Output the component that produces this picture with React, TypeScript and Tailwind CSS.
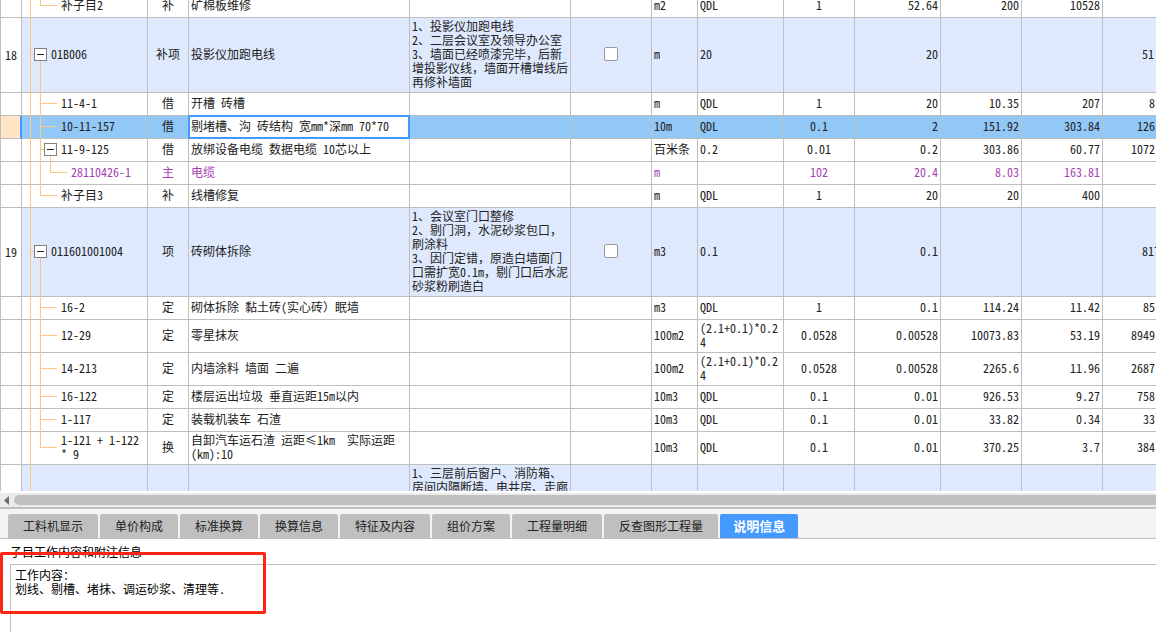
import React from 'react';

type Kind = 'group' | 'item' | 'selected' | 'material';

interface Row {
  no?: string;
  code: string;
  level: 1 | 2 | 3;
  expandable?: boolean;
  last?: boolean;
  kind: Kind;
  type: string;
  name: string;
  desc?: string;
  unit: string;
  expr: string;
  ratio: string;
  qty: string;
  price: string;
  total: string;
  extra: string;
  height: string;
}

const ROWS: Row[] = [
  { code: '补子目2', level: 2, last: true, kind: 'item', type: '补', name: '矿棉板维修', unit: 'm2', expr: 'QDL', ratio: '1', qty: '52.64', price: '200', total: '10528', extra: '', height: 'h-[23px]' },
  { no: '18', code: '01B006', level: 1, expandable: true, kind: 'group', type: '补项', name: '投影仪加跑电线', desc: '1、投影仪加跑电线\n2、二层会议室及领导办公室\n3、墙面已经喷漆完毕，后新增投影仪线，墙面开槽增线后再修补墙面', unit: 'm', expr: '20', ratio: '', qty: '20', price: '', total: '', extra: '51', height: 'h-[75px]' },
  { code: '11-4-1', level: 2, kind: 'item', type: '借', name: '开槽 砖槽', unit: 'm', expr: 'QDL', ratio: '1', qty: '20', price: '10.35', total: '207', extra: '8', height: 'h-[23px]' },
  { code: '10-11-157', level: 2, kind: 'selected', type: '借', name: '剔堵槽、沟 砖结构 宽mm*深mm 70*70', unit: '10m', expr: 'QDL', ratio: '0.1', qty: '2', price: '151.92', total: '303.84', extra: '126', height: 'h-[23px]' },
  { code: '11-9-125', level: 2, expandable: true, kind: 'item', type: '借', name: '放绑设备电缆 数据电缆 10芯以上', unit: '百米条', expr: '0.2', ratio: '0.01', qty: '0.2', price: '303.86', total: '60.77', extra: '1072', height: 'h-[23px]' },
  { code: '28110426-1', level: 3, last: true, kind: 'material', type: '主', name: '电缆', unit: 'm', expr: '', ratio: '102', qty: '20.4', price: '8.03', total: '163.81', extra: '', height: 'h-[23px]' },
  { code: '补子目3', level: 2, last: true, kind: 'item', type: '补', name: '线槽修复', unit: 'm', expr: 'QDL', ratio: '1', qty: '20', price: '20', total: '400', extra: '', height: 'h-[23px]' },
  { no: '19', code: '011601001004', level: 1, expandable: true, kind: 'group', type: '项', name: '砖砌体拆除', desc: '1、会议室门口整修\n2、剔门洞，水泥砂浆包口，刷涂料\n3、因门定错，原造白墙面门口需扩宽0.1m，剔门口后水泥砂浆粉刷造白', unit: 'm3', expr: '0.1', ratio: '', qty: '0.1', price: '', total: '', extra: '817', height: 'h-[89px]' },
  { code: '16-2', level: 2, kind: 'item', type: '定', name: '砌体拆除 黏土砖(实心砖）眠墙', unit: 'm3', expr: 'QDL', ratio: '1', qty: '0.1', price: '114.24', total: '11.42', extra: '85', height: 'h-[23px]' },
  { code: '12-29', level: 2, kind: 'item', type: '定', name: '零星抹灰', unit: '100m2', expr: '(2.1+0.1)*0.24', ratio: '0.0528', qty: '0.00528', price: '10073.83', total: '53.19', extra: '8949', height: 'h-[33px]' },
  { code: '14-213', level: 2, kind: 'item', type: '定', name: '内墙涂料 墙面 二遍', unit: '100m2', expr: '(2.1+0.1)*0.24', ratio: '0.0528', qty: '0.00528', price: '2265.6', total: '11.96', extra: '2687', height: 'h-[33px]' },
  { code: '16-122', level: 2, kind: 'item', type: '定', name: '楼层运出垃圾 垂直运距15m以内', unit: '10m3', expr: 'QDL', ratio: '0.1', qty: '0.01', price: '926.53', total: '9.27', extra: '758', height: 'h-[23px]' },
  { code: '1-117', level: 2, kind: 'item', type: '定', name: '装载机装车 石渣', unit: '10m3', expr: 'QDL', ratio: '0.1', qty: '0.01', price: '33.82', total: '0.34', extra: '33', height: 'h-[23px]' },
  { code: '1-121 + 1-122 * 9', level: 2, last: true, kind: 'item', type: '换', name: '自卸汽车运石渣 运距≤1km  实际运距(km):10', unit: '10m3', expr: 'QDL', ratio: '0.1', qty: '0.01', price: '370.25', total: '3.7', extra: '384', height: 'h-[33px]' },
  { code: '', level: 1, kind: 'group', type: '', name: '', desc: '1、三层前后窗户、消防箱、房间内隔断墙、电井房、走廊', unit: '', expr: '', ratio: '', qty: '', price: '', total: '', extra: '', height: 'h-[33px]' },
];

const TABS = ['工料机显示', '单价构成', '标准换算', '换算信息', '特征及内容', '组价方案', '工程量明细', '反查图形工程量', '说明信息'];

const ROW_STYLE: Record<Kind, string> = {
  group: 'bg-[#dee9fd]',
  item: 'bg-white',
  selected: 'bg-[#92c8f8]',
  material: 'bg-white text-[#a63fb4]',
};

const CODE_PADDING = { 1: 'pl-[29px]', 2: 'pl-[39px]', 3: 'pl-[49px]' };
const TOGGLE_LEFT = { 1: 'left-[12px]', 2: 'left-[22px]', 3: 'left-[32px]' };
const BRANCH_LEFT = { 1: 'left-[8px] w-[4px]', 2: 'left-[18px] w-[17px]', 3: 'left-[28px] w-[17px]' };

const CELL = 'border-r border-b border-[#bfbfbf] px-[2px] pb-[2px] align-middle';

// Latin is set half-width everywhere; full-width punctuation has to keep its whole cell
const Mixed: React.FC<{ text?: string }> = ({ text = '' }) => (
  <>
    {text.split(/([，）：])/).map((part, i) =>
      i % 2 === 1 ? (
        <span key={i} className="[font-feature-settings:normal]">{part}</span>
      ) : (
        part
      )
    )}
  </>
);

const TreeLines: React.FC<{ row: Row }> = ({ row }) => (
  <>
    <span className="absolute top-0 -bottom-px left-[8px] w-px bg-[#ffc67f]" />
    {row.level === 3 && <span className="absolute top-0 -bottom-px left-[18px] w-px bg-[#ffc67f]" />}
    {row.level === 2 && (
      <span className={`absolute top-0 left-[18px] w-px bg-[#ffc67f] ${row.last ? 'bottom-1/2' : '-bottom-px'}`} />
    )}
    {row.level === 3 && <span className="absolute top-0 bottom-1/2 left-[28px] w-px bg-[#ffc67f]" />}
    {row.code !== '' && <span className={`absolute top-1/2 -mt-px h-px bg-[#ffc67f] ${BRANCH_LEFT[row.level]}`} />}
    {row.expandable && (
      <>
        <span className={`absolute top-1/2 -bottom-px w-px bg-[#ffc67f] ${row.level === 1 ? 'left-[18px]' : 'left-[28px]'}`} />
        <button
          type="button"
          aria-label="折叠"
          className={`absolute top-1/2 -mt-[7px] flex size-[13px] items-center justify-center border border-[#808080] bg-white ${TOGGLE_LEFT[row.level]}`}
        >
          <span className="h-px w-[7px] bg-[#222222]" />
        </button>
      </>
    )}
  </>
);

const GridRow: React.FC<{ row: Row }> = ({ row }) => (
  <tr className={`${row.height} ${ROW_STYLE[row.kind]}`}>
    <td
      className={`border-b border-[#bfbfbf] text-center ${
        row.kind === 'selected' ? 'border-r-2 border-r-[#4499ff] bg-[#ffe4c6]' : 'border-r bg-white'
      }`}
    >
      {row.no}
    </td>
    <td className={`relative border-r border-b border-[#bfbfbf] pb-[2px] ${CODE_PADDING[row.level]}`}>
      <TreeLines row={row} />
      {row.code}
    </td>
    <td className={`${CELL} text-center`}>{row.type}</td>
    {row.kind === 'selected' ? (
      <td className="relative border-r border-b border-[#bfbfbf]">
        <input
          aria-label="名称"
          defaultValue={row.name}
          className="absolute -inset-px bg-white px-px pb-[2px] leading-[14px] outline-none border-2 border-[#4499ff]"
        />
      </td>
    ) : (
      <td className={`${CELL} whitespace-pre-wrap`}><Mixed text={row.name} /></td>
    )}
    <td className="border-r border-b border-[#bfbfbf] pb-[2px] pl-[2px] whitespace-pre-line"><Mixed text={row.desc} /></td>
    <td className={`${CELL} text-center`}>
      {row.kind === 'group' && row.code && (
        <input
          type="checkbox"
          aria-label="主要清单"
          className="mx-auto block size-[14px] appearance-none rounded-xs border border-[#999999] bg-white"
        />
      )}
    </td>
    <td className={CELL}>{row.unit}</td>
    <td className={`${CELL} break-all`}>{row.expr}</td>
    <td className={`${CELL} text-center`}>{row.ratio}</td>
    <td className={`${CELL} text-right`}>{row.qty}</td>
    <td className={`${CELL} text-right`}>{row.price}</td>
    <td className={`${CELL} text-right`}>{row.total}</td>
    <td className={`border-b border-[#bfbfbf] pb-[2px] ${row.kind === 'group' ? 'pl-[39px]' : 'pr-[5px] text-right'}`}>{row.extra}</td>
  </tr>
);

const BillGrid: React.FC = () => (
  <div className="h-[491px] overflow-hidden">
    <table className="-mt-[5px] w-full min-w-[1160px] table-fixed border-separate border-spacing-0 border-l border-[#bfbfbf]">
      <colgroup>
        <col className="w-[21px]" />
        <col className="w-[126px]" />
        <col className="w-[41px]" />
        <col />
        <col className="w-[161px]" />
        <col className="w-[81px]" />
        <col className="w-[46px]" />
        <col className="w-[86px]" />
        <col className="w-[71px]" />
        <col className="w-[86px]" />
        <col className="w-[81px]" />
        <col className="w-[81px]" />
        <col className="w-[57px]" />
      </colgroup>
      <tbody>
        {ROWS.map((row, i) => (
          <GridRow key={i} row={row} />
        ))}
      </tbody>
    </table>
  </div>
);

const ScrollBar: React.FC = () => (
  <div className="mt-[2px] flex h-[16px] items-center border-b-2 border-[#bfbfbf] bg-[#ebebeb]">
    <svg className="ml-[4px] h-[9px] w-[5px] shrink-0" viewBox="0 0 5 9" fill="#6b6d75">
      <path d="M5 0v9L0 4.5z" />
    </svg>
    <div className="ml-[5px] h-[10px] flex-1 rounded-l-full bg-[#bfbfbf]" />
  </div>
);

const TabBar: React.FC = () => (
  <div className="flex items-end gap-[2px] border-b border-[#bfbfbf] bg-[#f4f4f4] px-2 pt-[5px]">
    {TABS.map((tab) => (
      <button
        key={tab}
        type="button"
        className={`h-[24px] rounded-t-xs whitespace-nowrap ${
          tab === '说明信息' ? 'bg-[#4499ff] px-[13px] text-[13px] font-bold text-white' : 'bg-[#bfbfbf] px-[15px]'
        }`}
      >
        {tab}
      </button>
    ))}
  </div>
);

const NotesPanel: React.FC = () => (
  <div className="relative flex flex-1 flex-col pl-[10px] text-black">
    <div className="flex h-[25px] items-center">子目工作内容和附注信息</div>
    <div className="flex-1 border-t border-l border-[#bfbfbf] px-1 py-[3px] whitespace-pre-line">
      <Mixed text={'工作内容：\n划线、剔槽、堵抹、调运砂浆、清理等.'} />
    </div>
    <div className="absolute top-[13px] left-0 h-[62px] w-[266px] rounded-xs border-3 border-[#ff2414]" />
  </div>
);

const App: React.FC = () => {
  return (
    <div className="flex min-h-screen flex-col overflow-hidden bg-white font-['Noto_Sans_CJK_SC',sans-serif] text-[12px] leading-[14px] text-[#222222] [font-feature-settings:'hwid']">
      <BillGrid />
      <ScrollBar />
      <TabBar />
      <NotesPanel />
    </div>
  );
};

export default App;
